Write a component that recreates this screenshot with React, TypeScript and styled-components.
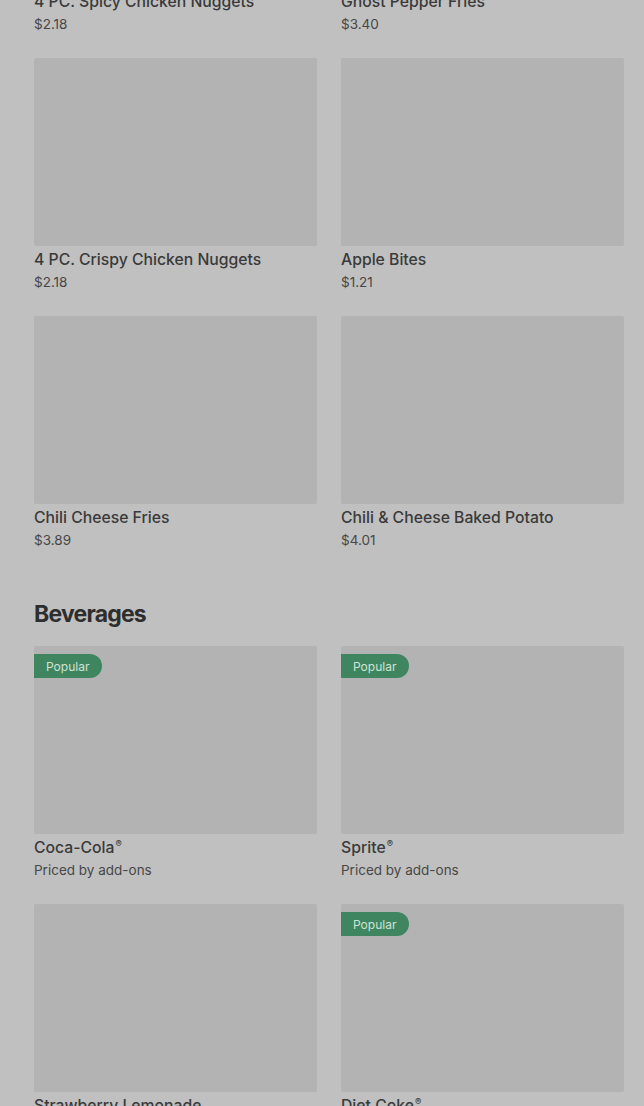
import React from "react";
import styled, { createGlobalStyle } from "styled-components";

const Global = createGlobalStyle`
  html, body { margin: 0; padding: 0; background: #c0c0c0; }
  body { font-family: Inter, Roboto, "Liberation Sans", Arial, sans-serif; overflow: hidden; }
`;

const Page = styled.div`
  width: 644px;
  height: 1106px;
  overflow: hidden;
  background: #c0c0c0;
`;

const Content = styled.div`
  padding: 0 20px 0 34px;
  margin-top: -200px;
`;

const Section = styled.section<{ $first?: boolean }>`
  display: flex;
  flex-direction: column;
  margin-top: ${(p) => (p.$first ? "0" : "48px")};
`;

const Heading = styled.h2`
  margin: 0 0 16px;
  font-family: Inter, "Noto Sans", sans-serif;
  font-weight: 700;
  font-size: 23px;
  line-height: 32px;
  letter-spacing: -0.8px;
  color: #2e2e2e;
`;

const Grid = styled.div`
  display: grid;
  grid-template-columns: 283px 283px;
  column-gap: 24px;
  row-gap: 24px;
`;

const Card = styled.div`
  display: flex;
  flex-direction: column;
`;

const Thumb = styled.div`
  position: relative;
  height: 188px;
  background: #b3b3b3;
  border-radius: 2px;
`;

const Badge = styled.span`
  position: absolute;
  left: 0;
  top: 8px;
  height: 24px;
  padding: 0 13px 0 12px;
  display: flex;
  align-items: center;
  background: #3f8660;
  color: #cfe2d6;
  font-family: Inter, sans-serif;
  font-size: 12px;
  border-radius: 0 12px 12px 0;
`;

const Name = styled.div`
  margin-top: 2px;
  height: 24px;
  font-size: 15.75px;
  font-weight: 500;
  line-height: 24px;
  color: #3a3a3a;
  white-space: nowrap;
`;

const Reg = styled.span`
  font-size: 0.6em;
  line-height: 0;
  vertical-align: 0.6em;
  margin-left: 1px;
`;

const Price = styled.div`
  font-size: 13.5px;
  line-height: 20px;
  color: #474747;
`;

type Item = { name: string; reg?: boolean; price: string; popular?: boolean };

const food: Item[] = [
  { name: "4 PC. Spicy Chicken Nuggets", price: "$2.18" },
  { name: "Ghost Pepper Fries", price: "$3.40" },
  { name: "4 PC. Crispy Chicken Nuggets", price: "$2.18" },
  { name: "Apple Bites", price: "$1.21" },
  { name: "Chili Cheese Fries", price: "$3.89" },
  { name: "Chili & Cheese Baked Potato", price: "$4.01" },
];

const drinks: Item[] = [
  { name: "Coca-Cola", reg: true, price: "Priced by add-ons", popular: true },
  { name: "Sprite", reg: true, price: "Priced by add-ons", popular: true },
  { name: "Strawberry Lemonade", price: "Priced by add-ons" },
  { name: "Diet Coke", reg: true, price: "Priced by add-ons", popular: true },
];

const ItemCard = ({ item }: { item: Item }) => (
  <Card>
    <Thumb>{item.popular && <Badge>Popular</Badge>}</Thumb>
    <Name>
      {item.name}
      {item.reg && <Reg>®</Reg>}
    </Name>
    <Price>{item.price}</Price>
  </Card>
);

export default function App() {
  return (
    <Page>
      <Global />
      <Content>
        <Section $first>
          <Grid>
            {food.map((f) => (
              <ItemCard key={f.name} item={f} />
            ))}
          </Grid>
        </Section>
        <Section>
          <Heading>Beverages</Heading>
          <Grid>
            {drinks.map((d) => (
              <ItemCard key={d.name} item={d} />
            ))}
          </Grid>
        </Section>
      </Content>
    </Page>
  );
}
